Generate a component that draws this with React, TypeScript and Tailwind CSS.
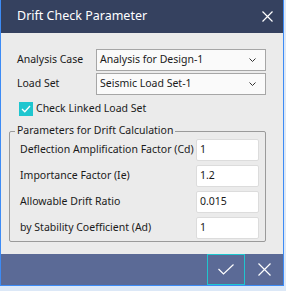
import React from "react";

const FONT = { fontFamily: '"Noto Sans", "Open Sans", sans-serif' };

function Select({ value }: { value: string }) {
  return (
    <div className="flex h-[22px] w-[170px] items-center justify-between border border-[#a6a6a6] bg-[#fafafa] pl-[3px] pr-[9px] text-[10.5px] text-[#1a1a1a]">
      <span>{value}</span>
      <svg width="7" height="4" viewBox="0 0 7 4" fill="none" stroke="#333" strokeWidth="1">
        <path d="M0.5 0.5 L3.5 3.5 L6.5 0.5" />
      </svg>
    </div>
  );
}

function ParamRow({ label, value }: { label: string; value: string }) {
  return (
    <div className="flex items-center justify-between">
      <span className="whitespace-nowrap text-[10.5px] text-[#1a1a1a]">{label}</span>
      <div className="flex h-[22px] w-[63px] items-center rounded-[2px] border border-[#dcdcdc] bg-white pl-[3px] text-[10.5px] text-[#1a1a1a]">
        {value}
      </div>
    </div>
  );
}

export default function App() {
  return (
    <div className="h-[291px] w-[286px] bg-[#dce8f7]" style={FONT}>
      <div className="flex h-[286px] w-[284px] flex-col border border-t-0 border-[#3d8bf5] bg-[#ebebeb]">
        {/* title bar */}
        <div className="flex h-[33px] items-center justify-between bg-[#35415f] pl-[16px] pr-[10px]">
          <span className="text-[12.5px] text-white">Drift Check Parameter</span>
          <svg width="11" height="11" viewBox="0 0 11 11" stroke="white" strokeWidth="1.2">
            <path d="M0.5 0.5 L10.5 10.5 M10.5 0.5 L0.5 10.5" />
          </svg>
        </div>

        {/* body */}
        <div className="flex h-[221px] flex-col pl-[8px] pr-[17px] pt-[16px]">
          <div className="flex flex-col gap-[2px] pl-[8px]">
            <div className="flex items-center justify-between">
              <span className="text-[10.5px] text-[#1a1a1a]">Analysis Case</span>
              <Select value="Analysis for Design-1" />
            </div>
            <div className="flex items-center justify-between">
              <span className="text-[10.5px] text-[#1a1a1a]">Load Set</span>
              <Select value="Seismic Load Set-1" />
            </div>
          </div>

          <div className="mt-[6px] flex items-center gap-[3px] pl-[10px]">
            <div className="flex h-[14px] w-[14px] items-center justify-center bg-[#1fc6cf]">
              <svg width="10" height="8" viewBox="0 0 10 8" fill="none" stroke="white" strokeWidth="1.3">
                <path d="M1 4 L3.8 6.8 L9 1" />
              </svg>
            </div>
            <span className="text-[10.5px] text-[#1a1a1a]">Check Linked Load Set</span>
          </div>

          <div className="relative mt-[14px] h-[111px] rounded-[2px] border border-[#9a9a9a] pl-[10px] pr-[6px] pt-[7px]">
            <span className="absolute left-[5px] top-[-9px] bg-[#ebebeb] px-[2px] text-[10.5px] text-[#1a1a1a]">
              Parameters for Drift Calculation
            </span>
            <div className="flex flex-col gap-[4px]">
              <ParamRow label="Deflection Amplification Factor (Cd)" value="1" />
              <ParamRow label="Importance Factor (Ie)" value="1.2" />
              <ParamRow label="Allowable Drift Ratio" value="0.015" />
              <ParamRow label="by Stability Coefficient (Ad)" value="1" />
            </div>
          </div>
        </div>

        {/* footer */}
        <div className="flex h-[31px] items-stretch justify-end bg-[#5b6a96]">
          <div className="flex w-[38px] items-center justify-center border border-[#1fc6cf]">
            <svg width="16" height="11" viewBox="0 0 16 11" fill="none" stroke="white" strokeWidth="1.2">
              <path d="M0.5 5 L5.5 10 L15.5 0.5" />
            </svg>
          </div>
          <div className="flex w-[38px] items-center justify-center">
            <svg width="13" height="13" viewBox="0 0 13 13" stroke="white" strokeWidth="1.2">
              <path d="M0.5 0.5 L12.5 12.5 M12.5 0.5 L0.5 12.5" />
            </svg>
          </div>
        </div>
      </div>
    </div>
  );
}
